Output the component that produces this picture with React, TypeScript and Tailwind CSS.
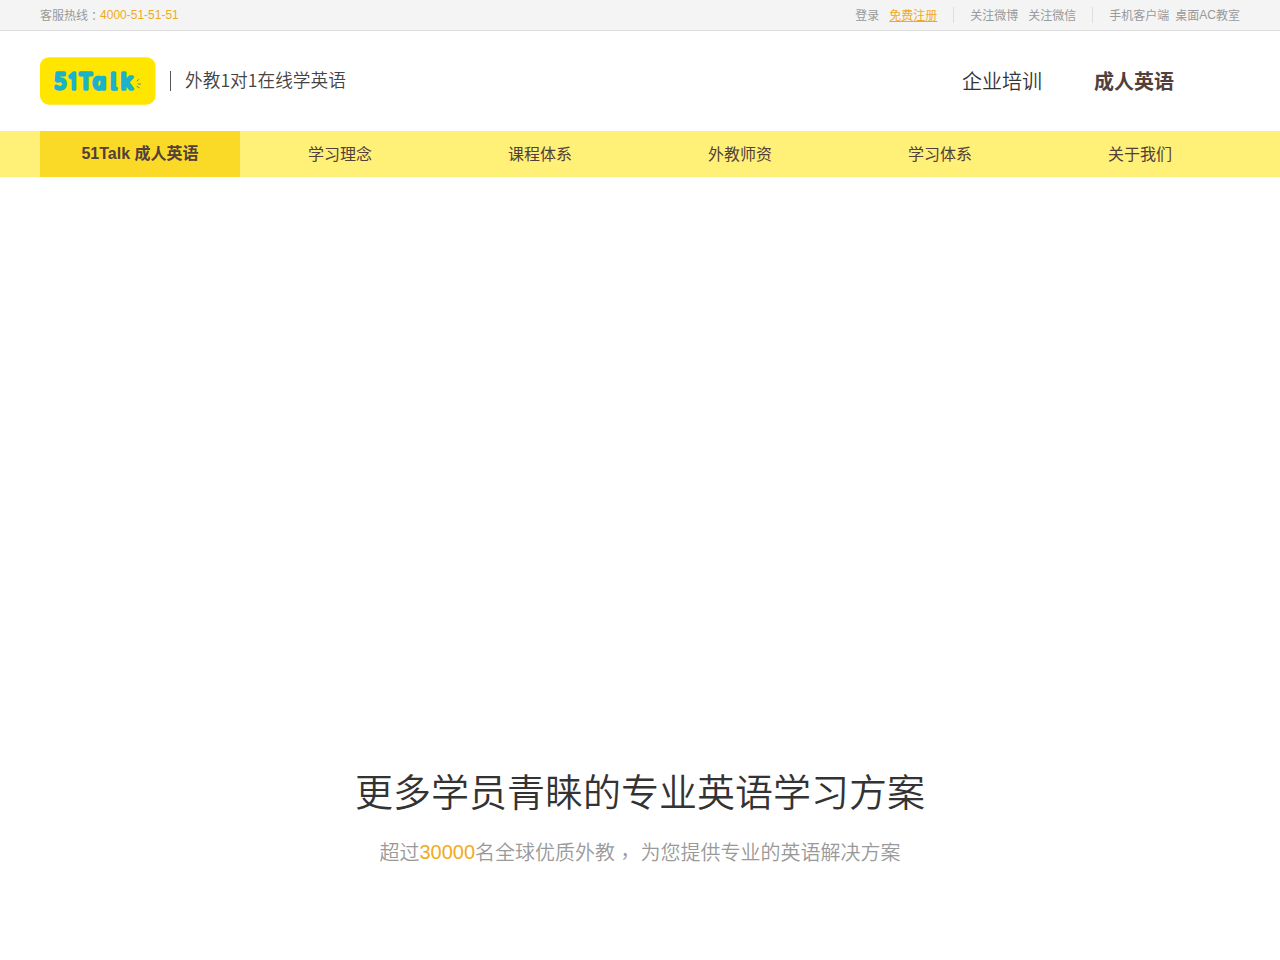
const navItems = ["学习理念", "课程体系", "外教师资", "学习体系", "关于我们"]

function Logo() {
  return (
    <svg width="116" height="48" viewBox="0 0 116 48" className="block">
      <rect width="115.5" height="47.5" y="0.2" rx="9" fill="#ffe600" />
      <g
        fill="#1cb2c9"
        stroke="#1cb2c9"
        strokeWidth="3.4"
        strokeLinejoin="round"
        fontFamily="'Noto Sans', 'Liberation Sans', sans-serif"
        fontSize="21.7"
      >
        <text x="14.6" y="32" textLength="11.8" lengthAdjust="spacingAndGlyphs">5</text>
        <text x="27.8" y="32" textLength="11" lengthAdjust="spacingAndGlyphs">1</text>
        <text x="39.8" y="32" textLength="12" lengthAdjust="spacingAndGlyphs">T</text>
        {/* unslanted italic for the round single-storey a */}
        <text transform="translate(54 32) skewX(12) scale(1.06 1)" fontStyle="italic">a</text>
        <text x="70.4" y="32">l</text>
        <text x="80.8" y="32" textLength="11.8" lengthAdjust="spacingAndGlyphs">k</text>
      </g>
      {/* foot of the l */}
      <path d="M73.3 28 Q73.3 31.7 76 31.7" fill="none" stroke="#1cb2c9" strokeWidth="4.4" strokeLinecap="round" />
      {/* sound marks */}
      <path
        d="M97 24 L99 22.3 M98 27 H100.6 M97 29.5 L99.3 30.8"
        stroke="#4a9a78"
        strokeWidth="1"
        strokeLinecap="round"
      />
    </svg>
  )
}

function TopBar() {
  return (
    <div className="h-[31px] border-b border-[#dedede] bg-[#f4f4f4] text-xs leading-[30px] text-[#999]">
      <div className="mx-auto flex h-[30px] w-[1200px] justify-between">
        <div>
          客服热线<span lang="zh-TW" className="align-[-1px] leading-none font-['Noto_Sans_CJK_TC',sans-serif]">：</span>
          <span className="align-[1px] text-[#f0ab1c]">4000-51-51-51</span>
        </div>
        <div className="flex h-[31px] items-center pt-px">
          <a>登录</a>
          <a className="ml-2.5 text-[#f0ab1c] underline">免费注册</a>
          <span className="mx-4 mb-0.5 h-4 w-px bg-[#dedede]" />
          <a>关注微博</a>
          <a className="ml-2.5">关注微信</a>
          <span className="mx-4 mb-0.5 h-4 w-px bg-[#dedede]" />
          <a>手机客户端</a>
          <a className="ml-1.5">
            桌面<span className="align-[1px] leading-none">AC</span>教室
          </a>
        </div>
      </div>
    </div>
  )
}

export default function App() {
  return (
    <div lang="zh-CN" className="h-[960px] overflow-hidden bg-white font-['Liberation_Sans','Noto_Sans_CJK_SC',sans-serif] text-[#333]">
      <TopBar />

      <header className="mx-auto flex h-[100px] w-[1200px] items-center justify-between">
        <div className="flex items-center">
          <Logo />
          <span className="ml-3.5 h-5 w-px bg-[#555]" />
          <span className="ml-3.5 pb-[5px] font-['Noto_Sans_CJK_SC',sans-serif] text-[17.7px] leading-6 font-[350] text-[#444]">
            外教1对1在线学英语
          </span>
        </div>
        <div className="mr-[66px] flex gap-[52px] pt-0.5 text-xl font-[350]">
          <a>企业培训</a>
          <a className="font-bold text-[#51403b]">成人英语</a>
        </div>
      </header>

      <nav className="h-[46px] bg-[#fff077]">
        <div className="mx-auto flex h-[46px] w-[1200px] text-center leading-[46px] text-[#51403b]">
          <a className="w-[200px] bg-[#fbda27] font-bold">51Talk 成人英语</a>
          {navItems.map((item) => (
            <a key={item} className="w-[200px] leading-[48px]">
              {item}
            </a>
          ))}
        </div>
      </nav>

      {/* banner area */}
      <div className="h-[586px]" />

      <section className="text-center font-[350]">
        <h1 className="text-[38px] leading-[60px] font-[350]">更多学员青睐的专业英语学习方案</h1>
        <p className="mt-3.5 text-xl leading-[30px] text-[#999]">
          超过<span className="align-[1px] text-[#f0ab1c]">30000</span>名全球优质外教
          <span lang="zh-TW" className="align-[-4px] leading-none font-['Noto_Sans_CJK_TC',sans-serif]">，</span>{" "}
          为您提供专业的英语解决方案
        </p>
      </section>
    </div>
  )
}
